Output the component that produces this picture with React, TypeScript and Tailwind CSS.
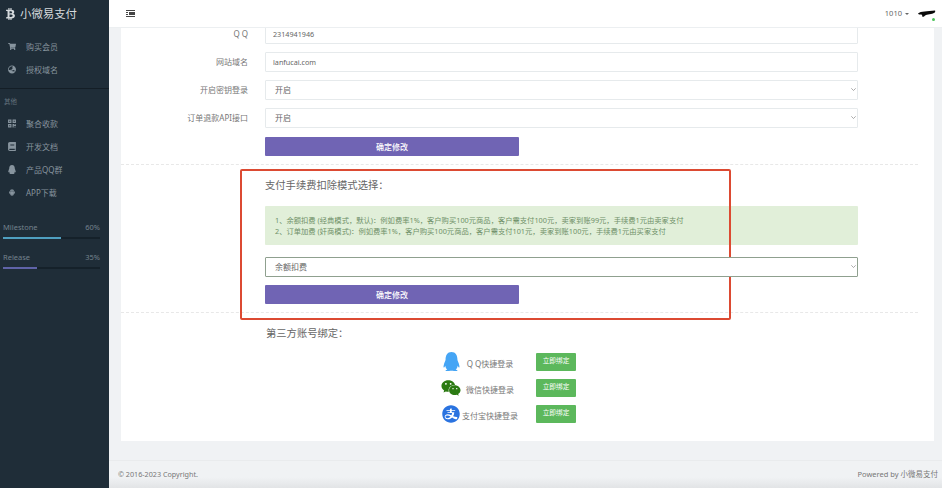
import { FaBook, FaBtc, FaGlobeAsia, FaQq, FaQrcode, FaShoppingCart, FaWeixin } from 'react-icons/fa';
import { AiFillAlipayCircle, AiFillAndroid } from 'react-icons/ai';

const FONT = '[font-family:"Noto_Sans","Noto_Sans_CJK_SC",sans-serif]';

const TOP_NAV = [
  { icon: FaShoppingCart, label: '购买会员' },
  { icon: FaGlobeAsia, label: '授权域名' },
];

const OTHER_NAV = [
  { icon: FaQrcode, label: '聚合收款' },
  { icon: FaBook, label: '开发文档' },
  { icon: FaQq, label: '产品QQ群' },
  { icon: AiFillAndroid, label: 'APP下载' },
];

const PROGRESS = [
  { label: 'Milestone', pct: 60, color: '#4f9fc0' },
  { label: 'Release', pct: 35, color: '#5f63a8' },
];

const BINDINGS = [
  { icon: <FaQq className="text-[19px] text-[#45a5f5]" />, label: 'Q Q快捷登录' },
  { icon: <FaWeixin className="text-[20px] text-[#2b7a12]" />, label: '微信快捷登录' },
  { icon: <AiFillAlipayCircle className="text-[22px] text-[#2a73e0]" />, label: '支付宝快捷登录' },
];

function NavItem({ icon: Icon, label }: { icon: typeof FaBook; label: string }) {
  return (
    <div className="flex h-[23px] items-center pl-2 text-[8px] text-[#87949e]">
      <Icon className="w-[8px] h-[9px] mr-[10px] shrink-0" />
      <span>{label}</span>
    </div>
  );
}

function Sidebar() {
  return (
    <aside className="w-[109px] shrink-0 bg-[#1f2d38] flex flex-col">
      <div className="h-[28px] flex items-center pl-[6px] text-[#d5dadd]">
        <FaBtc className="w-[9px] h-[12px] mr-[5px]" />
        <span className="text-[11.4px]">小微易支付</span>
      </div>
      <div className="pt-[7px] pb-[7px] border-b border-[#141e26]">
        {TOP_NAV.map(n => <NavItem key={n.label} {...n} />)}
      </div>
      <div className="pl-[4px] pt-[8px] pb-[5px] text-[6.5px] leading-[10px] text-[#63717c]">其他</div>
      <div>
        {OTHER_NAV.map(n => <NavItem key={n.label} {...n} />)}
      </div>
      <div className="pt-[17px] pl-[3px] pr-[9px] flex flex-col gap-[12px]">
        {PROGRESS.map(p => (
          <div key={p.label}>
            <div className="flex justify-between text-[7.5px] leading-[12px] text-[#74828d]">
              <span>{p.label}</span>
              <span>{p.pct}%</span>
            </div>
            <div className="mt-[4px] h-[2px] bg-[#15212a]">
              <div className="h-full" style={{ width: `${p.pct}%`, background: p.color }} />
            </div>
          </div>
        ))}
      </div>
    </aside>
  );
}

function Header() {
  return (
    <header className="h-[28px] shrink-0 bg-white border-b border-[#eceff1] flex items-center justify-between pl-[17px] pr-[6px]">
      <svg width="9" height="7" viewBox="0 0 9 7" className="text-[#444]">
        <path d="M0 .5h9M0 6.500h9M0 2.500h2M0 4.500h2" stroke="currentColor" strokeWidth="1" fill="none" />
        <rect x="3" y="2" width="6" height="3" fill="currentColor" />
      </svg>
      <div className="relative flex items-center text-[7.5px] text-[#666]">
        <span>1010</span>
        <span className="ml-[3px] mr-[9px] border-x-[2px] border-t-[2px] border-x-transparent border-t-[#666]" />
        <svg width="18" height="8" viewBox="0 0 18 8">
          <path d="M0 3.500C3 1 9 1.500 17 .5c1 1.500-1 3-4 3.500-2 .5-4 .5-5 1-2 1-2 2-3.500 2 0-1-.5-2-1-2.500C2 4.500 0 4.500 0 3.500z" fill="#0a0a0a" />
        </svg>
        <span className="absolute right-[1px] top-[10px] w-[3px] h-[3px] rounded-full bg-[#4cc35a]" />
      </div>
    </header>
  );
}

function TextField({ value }: { value: string }) {
  return (
    <input
      readOnly
      value={value}
      className="block w-full h-[20px] bg-white border border-[#e6eaec] rounded-[1px] px-[7px] text-[7.2px] text-[#666] outline-none"
    />
  );
}

function SelectField({ value, dark }: { value: string; dark?: boolean }) {
  return (
    <div className="relative h-[20px]">
      <select
        defaultValue={value}
        className={`block w-full h-[20px] appearance-none bg-white border rounded-[1px] pl-[9px] text-[8px] text-[#666] outline-none ${dark ? 'border-[#8fa08f]' : 'border-[#e6eaec]'}`}
      >
        <option>{value}</option>
      </select>
      <svg width="5" height="3" viewBox="0 0 5 3" className="absolute right-[2px] top-[8px] text-[#888]">
        <path d="M.3.3l2.200 2.200L4.700.3" stroke="currentColor" strokeWidth=".7" fill="none" />
      </svg>
    </div>
  );
}

function FormRow({ label, children }: { label: string; children: React.ReactNode }) {
  return (
    <div className="grid grid-cols-[127px_593px] gap-x-[17px] items-center h-[20px]">
      <label className="text-right text-[8px] text-[#777]">{label}</label>
      {children}
    </div>
  );
}

function SubmitButton() {
  return (
    <button className="block w-[254px] h-[19px] bg-[#7064b4] rounded-[1px] text-white text-[8px] font-medium">
      确定修改
    </button>
  );
}

function Card() {
  return (
    <div className="-mt-[4px] bg-white">
      <div className="flex flex-col gap-[8px]">
        <FormRow label="Q Q"><TextField value="2314941946" /></FormRow>
        <FormRow label="网站域名"><TextField value="lanfucai.com" /></FormRow>
        <FormRow label="开启密钥登录"><SelectField value="开启" /></FormRow>
        <FormRow label="订单退款API接口"><SelectField value="开启" /></FormRow>
      </div>
      <div className="mr-[16px] pl-[144px] pt-[9px] pb-[8px] border-b border-dashed border-[#e8e8e8]">
        <SubmitButton />
      </div>

      <section className="relative mr-[16px] pl-[144px] pr-[60px] pb-[8px] border-b border-dashed border-[#e8e8e8]">
        <div className="absolute left-[119px] top-[4px] w-[491px] h-[151px] border-[2px] border-[#dc4a32] rounded-[2px] pointer-events-none" />
        <h3 className="pt-[13px] h-[41px] text-[10.300px] leading-[14px] text-[#666]">支付手续费扣除模式选择：</h3>
        <div className="h-[39px] bg-[#e1efd9] rounded-[1px] px-[10px] flex flex-col justify-center text-[7.3px] leading-[10.500px] text-[#6f8f68]">
          <p>1、余额扣费 (经典模式，默认)：例如费率1%，客户购买100元商品，客户需支付100元，卖家到账99元，手续费1元由卖家支付</p>
          <p>2、订单加费 (奸商模式)：例如费率1%，客户购买100元商品，客户需支付101元，卖家到账100元，手续费1元由买家支付</p>
        </div>
        <div className="mt-[12px] mb-[8px]"><SelectField value="余额扣费" dark /></div>
        <SubmitButton />
      </section>

      <div className="pl-[145px] pt-[13px] h-[39px] text-[10.300px] leading-[14px] text-[#666]">第三方账号绑定：</div>
      <div className="pl-[320px] pb-[18px] flex flex-col gap-[7px]">
        {BINDINGS.map(b => (
          <div key={b.label} className="flex items-center h-[19px]">
            <span className="w-[20px] flex justify-center">{b.icon}</span>
            <span className="w-[58px] pt-[5px] text-center text-[8px] whitespace-nowrap text-[#777]">{b.label}</span>
            <button className="ml-[17px] w-[40px] h-[18px] bg-[#5cb85c] rounded-[1px] text-white text-[6.700px]">立即绑定</button>
          </div>
        ))}
      </div>
    </div>
  );
}

export default function App() {
  return (
    <div className={`${FONT} flex h-[488px] w-[942px] overflow-hidden`}>
      <Sidebar />
      <div className="flex-1 flex flex-col min-w-0 bg-[#f0f2f4]">
        <Header />
        <main className="flex-1 overflow-hidden pl-[12px] pr-[8px]">
          <Card />
        </main>
        <footer className="h-[28px] shrink-0 border-t border-[#e9ebed] flex items-center justify-between pl-[9px] pr-[4px] text-[#777] bg-gradient-to-b from-[#f0f2f4] from-60% to-[#e2e4e6]">
          <span className="text-[7.2px]">© 2016-2023 Copyright.</span>
          <span className="text-[7.5px]">Powered by 小微易支付</span>
        </footer>
      </div>
    </div>
  );
}
